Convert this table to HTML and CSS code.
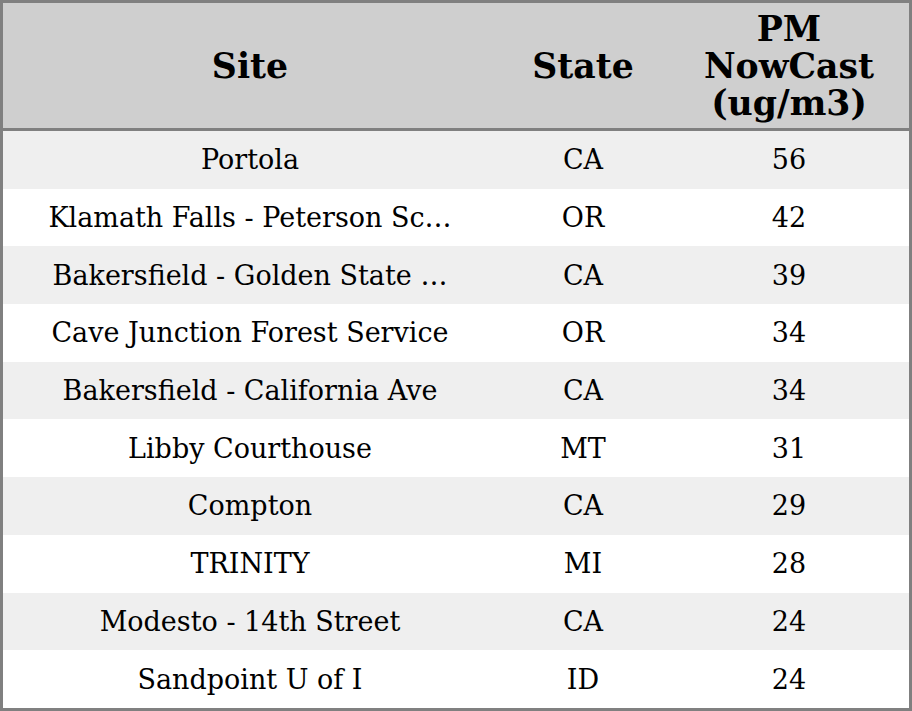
FILE: index.html
```html
<!DOCTYPE html>
<html>
<head>
<meta charset="utf-8">
<link rel="stylesheet" href="styles.css">
</head>
<body>
<table class="aq">
  <thead>
    <tr>
      <th class="c-site">Site</th>
      <th class="c-state">State</th>
      <th class="c-pm">PM<br>NowCast<br>(ug/m3)</th>
    </tr>
  </thead>
  <tbody>
    <tr><td>Portola</td><td>CA</td><td>56</td></tr>
    <tr><td>Klamath Falls - Peterson Sc…</td><td>OR</td><td>42</td></tr>
    <tr><td>Bakersfield - Golden State …</td><td>CA</td><td>39</td></tr>
    <tr><td>Cave Junction Forest Service</td><td>OR</td><td>34</td></tr>
    <tr><td>Bakersfield - California Ave</td><td>CA</td><td>34</td></tr>
    <tr><td>Libby Courthouse</td><td>MT</td><td>31</td></tr>
    <tr><td>Compton</td><td>CA</td><td>29</td></tr>
    <tr><td>TRINITY</td><td>MI</td><td>28</td></tr>
    <tr><td>Modesto - 14th Street</td><td>CA</td><td>24</td></tr>
    <tr><td>Sandpoint U of I</td><td>ID</td><td>24</td></tr>
  </tbody>
</table>
</body>
</html>
```
FILE: styles.css
```css
html, body {
  margin: 0;
  padding: 0;
  background: #ffffff;
}
.aq {
  width: 912px;
  border-collapse: collapse;
  border: 3px solid #808080;
  font-family: "DejaVu Serif", serif;
  color: #000;
  table-layout: fixed;
}
.aq thead th {
  background: #cfcfcf;
  font-weight: bold;
  font-size: 34.67px;
  line-height: 37px;
  height: 125px;
  padding: 0;
  text-align: center;
  vertical-align: middle;
  border-bottom: 3px solid #808080;
}
.c-site { width: 494px; }
.c-state { width: 172px; }
.c-pm { width: 240px; }
.aq tbody td {
  font-size: 27px;
  height: 57.7px;
  padding: 0;
  text-align: center;
  vertical-align: middle;
  white-space: nowrap;
}
.aq tbody tr:nth-child(odd) td {
  background: #efefef;
}
```
